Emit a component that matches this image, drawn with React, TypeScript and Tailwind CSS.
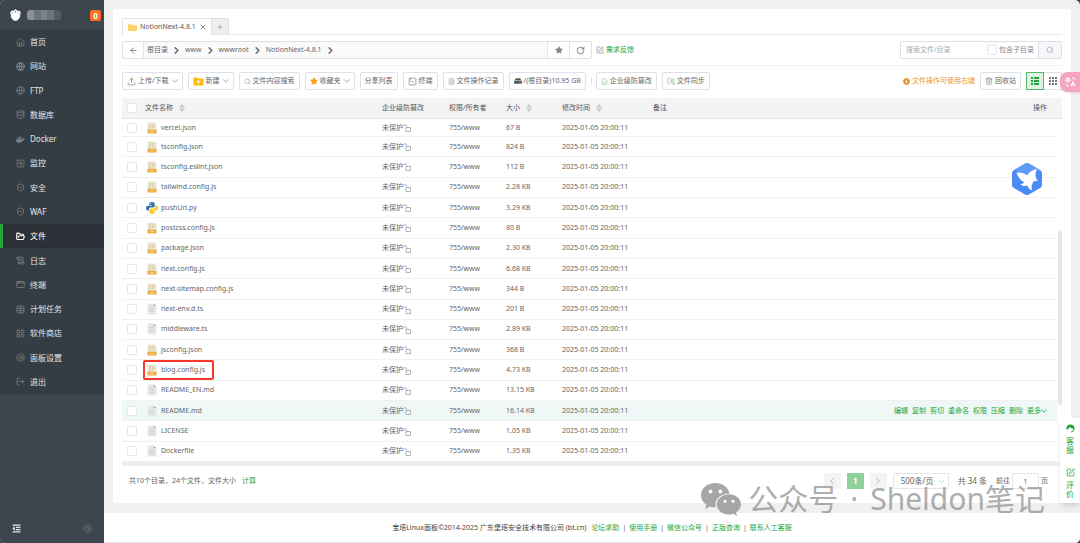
import type { ReactNode } from "react"
import {
  AppWindow, ArrowLeft, Bolt, ChevronDown, ChevronLeft, ChevronRight, Database, FilePenLine, FileText,
  FolderOpen, FolderSync, Globe, House, LayoutGrid, LogOut, Plus,
  RotateCw, ScrollText, Search, ShieldCheck, ShieldMinus, SquareActivity, SquarePen, SquareTerminal,
  Table, Trash2, Upload, X,
} from "lucide-react"
import { FaDocker, FaFolder, FaHdd, FaInfoCircle, FaOutdent, FaStar } from "react-icons/fa"

const menu = [
  { name: "首页", icon: <House size={9} /> },
  { name: "网站", icon: <Globe size={9} strokeWidth={3} /> },
  { name: "FTP", icon: <Globe size={9} /> },
  { name: "数据库", icon: <Database size={9} /> },
  { name: "Docker", icon: <FaDocker size={9} /> },
  { name: "监控", icon: <SquareActivity size={9} /> },
  { name: "安全", icon: <ShieldCheck size={9} /> },
  { name: "WAF", icon: <ShieldMinus size={9} /> },
  { name: "文件", icon: <FolderOpen size={9} strokeWidth={3} />, active: true },
  { name: "日志", icon: <ScrollText size={9} /> },
  { name: "终端", icon: <AppWindow size={9} /> },
  { name: "计划任务", icon: <Table size={9} /> },
  { name: "软件商店", icon: <LayoutGrid size={9} /> },
  { name: "面板设置", icon: <Bolt size={9} /> },
  { name: "退出", icon: <LogOut size={9} /> },
]

const files = [
  { name: "vercel.json", size: "67 B", type: "js" },
  { name: "tsconfig.json", size: "824 B", type: "js" },
  { name: "tsconfig.eslint.json", size: "112 B", type: "js" },
  { name: "tailwind.config.js", size: "2.28 KB", type: "js" },
  { name: "pushUrl.py", size: "3.29 KB", type: "py" },
  { name: "postcss.config.js", size: "80 B", type: "js" },
  { name: "package.json", size: "2.30 KB", type: "js" },
  { name: "next.config.js", size: "6.68 KB", type: "js" },
  { name: "next-sitemap.config.js", size: "344 B", type: "js" },
  { name: "next-env.d.ts", size: "201 B", type: "txt" },
  { name: "middleware.ts", size: "2.89 KB", type: "txt" },
  { name: "jsconfig.json", size: "368 B", type: "js" },
  { name: "blog.config.js", size: "4.73 KB", type: "js", marked: true },
  { name: "README_EN.md", size: "13.15 KB", type: "txt" },
  { name: "README.md", size: "16.14 KB", type: "txt", hover: true },
  { name: "LICENSE", size: "1.05 KB", type: "txt" },
  { name: "Dockerfile", size: "1.35 KB", type: "txt" },
]

const actions = ["编辑", "复制", "剪切", "重命名", "权限", "压缩", "删除"]
const links = ["论坛求助", "使用手册", "微信公众号", "正版查询", "联系人工客服"]

function FileIcon({ type }: { type: string }) {
  if (type === "py") {
    return (
      <svg width="12" height="12" viewBox="0 0 24 24" className="-ml-px">
        <path fill="#2f73a8" d="M11.9 0C7 0 6.500 2 6.500 4v2.500h5.800v1H4C1.500 7.500 0 9.500 0 12.200c0 2.800 1.400 5 3.500 5H5.800v-3c0-1.900 1.500-3.300 3.200-3.300h5.500c1.700 0 2.900-1.300 2.900-2.900V4C17.400 1.500 15.300 0 11.900 0zM9.300 2.200a1.100 1.100 0 1 1 0 2.200 1.100 1.100 0 0 1 0-2.200z" />
        <path fill="#fbca1d" d="M12.200 24c4.900 0 5.400-2 5.400-4v-2.500h-5.800v-1h8.300c2.500 0 3.900-2 3.900-4.700 0-2.800-1.400-5-3.500-5h-1.900v3c0 1.900-1.500 3.300-3.200 3.300H9.900c-1.700 0-2.900 1.300-2.900 2.900v4C7 22.500 8.800 24 12.200 24zm2.600-2.200a1.100 1.100 0 1 1 0-2.200 1.100 1.100 0 0 1 0 2.200z" />
      </svg>
    )
  }
  if (type === "js") {
    return (
      <svg width="10" height="12" viewBox="0 0 10 12">
        <path fill="#e9e5d6" d="M.5.500h7L9.500 2.500v6h-9z" />
        <path fill="none" stroke="#e3c37c" strokeWidth=".8" d="M3.800 2.300H3v4.400h-.8M6 2.300h1.200M6 4.500h1.200M6 2.300v4.400" />
        <path fill="#f0aa3c" d="M.5 7.800h9v3.700h-9z" />
        <path stroke="#fbe3b8" strokeWidth=".8" d="M3 9.700h4" />
      </svg>
    )
  }
  return (
    <svg width="10" height="12" viewBox="0 0 10 12">
      <path fill="#e7e7e7" d="M.5.500h6L9.500 3v8.500h-9z" />
      <path fill="#b5b5b5" d="M6.500.500L9.500 3h-3z" />
      <path stroke="#c6c6c6" strokeWidth=".7" d="M2.300 4.500h5M2.300 6.500h5M2.300 8.500h5" />
    </svg>
  )
}

function Sort() {
  return (
    <svg width="6" height="8" viewBox="0 0 6 8" className="inline-block ml-[6px]" fill="#c3c6cc">
      <path d="M3 0l3 3.500H0zM3 8L0 4.500h6z" />
    </svg>
  )
}

function Unlock() {
  return (
    <svg width="8" height="8" viewBox="0 0 8 8" fill="none" stroke="#aaa" strokeWidth=".9" className="mt-px">
      <path d="M3 3.500h4.500v4H3zM.5 2.500V1.800Q.8.600 2 .600T3.500 1.800v1.700" />
    </svg>
  )
}

function Down() {
  return <ChevronDown size={10} className="-ml-px -mr-[2px] text-[#999]" />
}

function Check({ label }: { label: string }) {
  return <input type="checkbox" aria-label={label} className="block appearance-none size-[10px] shrink-0 bg-white border border-[#e4e7ed] rounded-[2px]" />
}

function Btn({ children }: { children: ReactNode }) {
  return (
    <button className="h-[18px] px-[4px] flex items-center gap-[2px] bg-white border border-[#dfe1e6] rounded-[2px] whitespace-nowrap">{children}</button>
  )
}

function Sidebar() {
  return (
    <aside className="w-[104px] shrink-0 flex flex-col bg-[#3d454e] text-[#e3e5e7]">
      <div className="h-[30px] pl-[10px] pr-[3px] flex items-center">
        <svg width="11" height="12" viewBox="0 0 22 24" fill="#fff">
          <path d="M11 0l3 3 6 1 2 5-2 2 .3 5L16 22l-5 2-5-2-4.300-6L2 11 0 9l2-5 6-1z" />
          <path d="M3 9l4-3M19 9l-4-3M11 3v5" stroke="#7a828a" strokeWidth="1.500" />
        </svg>
        <div className="ml-[6px] w-[34px] h-[10px] rounded-[3px] overflow-hidden flex">
          <span className="flex-1 bg-[#8b9096]"></span>
          <span className="flex-1 bg-[#6c737a]"></span>
          <span className="flex-1 bg-[#7c8289]"></span>
          <span className="flex-1 bg-[#6c737a]"></span>
          <span className="flex-1 bg-[#535b63]"></span>
        </div>
        <span className="ml-auto size-[11px] rounded-[2px] bg-[#fc6d26] text-white font-bold text-[8px] leading-[11px] text-center">0</span>
      </div>

      <nav className="h-[364px] flex flex-col bg-[#353d44] text-[8px]">
        {menu.map((m) => (
          <a key={m.name} href="#" className={m.active
            ? "flex-1 flex items-center gap-[5px] pl-[13px] border-l-[3px] border-[#20a53a] bg-[#2c3138] text-white"
            : "flex-1 flex items-center gap-[5px] pl-[16px]"}>
            <span className={m.active ? "text-white" : "text-[#7d848a]"}>{m.icon}</span>
            {m.name}
          </a>
        ))}
      </nav>

      <div className="mt-auto h-[30px] px-[12px] flex items-center justify-between">
        <FaOutdent size={9} />
        <Bolt size={9} className="text-[#727980]" />
      </div>
    </aside>
  )
}

function FileTable() {
  return (
    <div className="relative mt-[8px] border-b-[4px] border-[#efefef]">
      <table className="table-fixed w-full h-[364px] border-separate border-spacing-0 text-left whitespace-nowrap">
        <thead>
          <tr className="h-[21px] bg-[#f4f4f4] text-[#555] [&>th]:font-normal [&>th]:p-0 [&>th]:border-b [&>th]:border-[#e6e6e6]">
            <th className="w-[23px]"><div className="pl-[5px]"><Check label="全选" /></div></th>
            <th className="w-[237px]">文件名称<Sort /></th>
            <th className="w-[67px]">企业级防篡改</th>
            <th className="w-[57px]">权限/所有者</th>
            <th className="w-[56px]">大小<Sort /></th>
            <th className="w-[91px]">修改时间<Sort /></th>
            <th>备注</th>
            <th className="w-[180px] text-right"><div className="pr-[10px]">操作</div></th>
            <th className="w-[5px]"></th>
          </tr>
        </thead>
        <tbody>
          {files.map((f, i) => (
            <tr key={f.name} className={(i === 0 ? "h-[18px] " : "") + "[&>td]:p-0 [&>td:not(:last-child)]:border-b [&>td]:border-[#f0f0f0] " + (f.hover ? "[&>td:not(:last-child)]:bg-[#eff8f6]" : "")}>
              <td><div className="pl-[5px]"><Check label={f.name} /></div></td>
              <td className="relative">
                <div className="flex items-center pl-[2px]">
                  <span className="w-[14px]"><FileIcon type={f.type} /></span>
                  {f.name}
                </div>
                {f.marked && <div className="absolute inset-y-0 -left-[2px] w-[71px] border-2 border-[#f5372c] rounded-[2px]"></div>}
              </td>
              <td>
                <div className="flex items-center">未保护<Unlock /></div>
              </td>
              <td>755/www</td>
              <td>{f.size}</td>
              <td>2025-01-05 20:00:11</td>
              <td></td>
              <td>
                {f.hover && (
                  <div className="flex justify-end gap-[4px] pr-[10px] text-[#20a53a]">
                    {actions.map((a) => <a key={a} href="#">{a}</a>)}
                    <a href="#" className="flex items-center">更多<ChevronDown size={10} className="-mx-[2px]" /></a>
                  </div>
                )}
              </td>
              <td></td>
            </tr>
          ))}
        </tbody>
      </table>
      {/* scroll thumb */}
      <div className="absolute right-0 bottom-[57px] w-[4px] h-[174px] rounded-full bg-[#e6e6e6]"></div>
      <svg className="absolute right-[20px] top-[65px]" width="30" height="32" viewBox="0 0 30 32">
        <path fill="#4a8bf5" d="M13 .6q2-1.100 4 0l11 6.300q2 1.100 2 3.400v11.400q0 2.300-2 3.400l-11 6.300q-2 1.100-4 0l-11-6.300q-2-1.100-2-3.400V10.300Q0 8 2 6.900z" />
        <path fill="#7aacfb" d="M13 .6q2-1.100 4 0l11 6.300L15 14 2 6.900z" opacity=".45" />
        <path fill="#fff" d="M4.500 9.500c4.500-.5 8 .5 10.500 3C17 9 20 7 25 6c-1.500 3-2 5.500-1.200 8 .3 1.300 1 2.700 2.400 3.700-2 0-3.700.3-5 1-1.300 2.800-2 5.500-1.200 8.800-2.500-1-4-2.700-4.800-4.900-2.700.9-5.200.3-7-1.600 2 .1 3.200-.5 4-1.700C8.700 17.500 6 14.500 4.500 9.500z" />
      </svg>
    </div>
  )
}

export default function App() {
  return (
    <div className="bg-[#3a3a3a] min-h-screen flex font-['Noto_Sans','Noto_Sans_CJK_SC',sans-serif] text-[7px] leading-[10px] text-[#666]">
      <div className="relative flex-1 flex rounded-[5px] overflow-hidden bg-[#f0f0f0]">
        <Sidebar />

        <main className="flex-1 min-w-0 flex flex-col">
          <section className="m-[9px] mb-[10px] p-[9px] pb-[14px] bg-white rounded-[2px]">
            {/* tabs */}
            <div className="flex h-[17px] border-b border-[#e8e8e8]">
              <div className="w-[90px] h-[17px] pl-[5px] pr-[4px] flex items-center bg-white border border-b-0 border-[#e3e3e3] text-[#555]">
                <FaFolder size={9} className="text-[#ffd368]" />
                <span className="ml-[3px]">NotionNext-4.8.1</span>
                <button aria-label="关闭" className="ml-auto"><X size={8} /></button>
              </div>
              <button aria-label="新标签" className="w-[17px] grid place-items-center bg-[#efefef] border border-l-0 border-b-0 border-[#dedede] text-[#999]"><Plus size={8} /></button>
            </div>

            {/* path */}
            <div className="mt-[6px] flex items-center">
              <div className="w-[470px] h-[18px] flex border border-[#dcdfe3] rounded-[2px]">
                <button aria-label="返回" className="w-[21px] grid place-items-center border-r border-[#e3e5e8]"><ArrowLeft size={9} /></button>
                <div className="flex-1 pl-[3px] flex items-center gap-[3px] bg-[#fafafa]">
                  {["根目录", "www", "wwwroot", "NotionNext-4.8.1"].map((p) => (
                    <a key={p} href="#" className="flex items-center gap-[3px]">{p}<ChevronRight size={11} strokeWidth={3} /></a>
                  ))}
                </div>
                <button aria-label="收藏" className="w-[22px] grid place-items-center border-l border-[#e3e5e8] text-[#888]"><FaStar size={8} /></button>
                <button aria-label="刷新" className="w-[22px] grid place-items-center border-l border-[#e3e5e8]"><RotateCw size={9} /></button>
              </div>
              <a href="#" className="ml-[4px] flex items-center gap-[2px] text-[#20a53a]"><SquarePen size={8} className="text-[#888]" />需求反馈</a>
              <div className="ml-auto w-[162px] h-[18px] flex items-center border border-[#dcdfe6] rounded-[2px]">
                <input aria-label="搜索" placeholder="搜索文件/目录" className="flex-1 min-w-0 pl-[5px] outline-none placeholder:text-[#aaa]" />
                <label className="flex items-center gap-[2px] pr-[4px] text-[#888]"><Check label="包含子目录" />包含子目录</label>
                <button aria-label="搜索文件" className="w-[23px] h-full grid place-items-center bg-[#f5f7fa] border-l border-[#dcdfe6] text-[#999]"><Search size={8} /></button>
              </div>
            </div>

            {/* toolbar */}
            <div className="mt-[6px] pt-[6px] border-t border-[#f0f0f0] flex items-center gap-[5px]">
              <Btn><Upload size={9} className="text-[#888]" />上传/下载<Down /></Btn>
              <Btn>
                <svg width="11" height="9" viewBox="0 0 11 9"><path fill="#fbbd08" d="M.5.500h3.500L5 1.500h5.500v7H.5z" /><path stroke="#fff" d="M5.500 3v3.600M3.700 4.800h3.600" /></svg>
                新建<Down />
              </Btn>
              <Btn><Search size={7} className="text-[#999]" />文件内容搜索</Btn>
              <Btn><FaStar size={8} className="text-[#f9a11b]" />收藏夹<Down /></Btn>
              <Btn>分享列表</Btn>
              <Btn><SquareTerminal size={9} className="text-[#888]" />终端</Btn>
              <Btn><FileText size={7} className="text-[#999]" />文件操作记录</Btn>
              <Btn><FaHdd size={8} className="text-[#555]" />/(根目录)10.95 GB</Btn>
              <span className="w-px h-[6px] -mr-px bg-[#ddd]"></span>
              <Btn><FilePenLine size={7} className="text-[#7fc48c]" />企业级防篡改</Btn>
              <Btn><FolderSync size={8} className="text-[#7fc48c]" />文件同步</Btn>
              <span className="ml-auto flex items-center gap-[2px] text-[#f0932b]"><FaInfoCircle size={7} />文件操作可使用右键</span>
              <Btn><Trash2 size={8} className="text-[#888]" />回收站</Btn>
              <div className="flex h-[18px]">
                <button aria-label="列表" className="w-[18px] grid place-items-center bg-[#dff3e3] border border-[#52b966]">
                  <svg width="8" height="8" viewBox="0 0 8 8" stroke="#20a53a" strokeWidth="2"><path d="M0 1h2M3 1h5M0 4h2M3 4h5M0 7h2M3 7h5" /></svg>
                </button>
                <button aria-label="图标" className="w-[18px] grid place-items-center border border-l-0 border-[#dfe1e6]">
                  <svg width="8" height="8" viewBox="0 0 8 8" stroke="#777" strokeWidth="2"><path d="M0 1h2M3 1h2M6 1h2M0 4h2M3 4h2M6 4h2M0 7h2M3 7h2M6 7h2" /></svg>
                </button>
              </div>
            </div>

            <FileTable />

            {/* pagination */}
            <div className="mt-[7px] pl-[7px] pr-[14px] h-[16px] flex items-center">
              <span>共10个目录，24个文件，文件大小</span>
              <a href="#" className="ml-[6px] text-[#20a53a]">计算</a>
              <div className="ml-auto flex items-center gap-[6px]">
                <button aria-label="上一页" className="w-[17px] h-[16px] grid place-items-center bg-[#f4f4f5] text-[#aaa]"><ChevronLeft size={10} /></button>
                <button className="w-[17px] h-[16px] bg-[#8fd19c] text-white font-bold text-[8px]">1</button>
                <button aria-label="下一页" className="w-[17px] h-[16px] grid place-items-center bg-[#f4f4f5] text-[#aaa]"><ChevronRight size={10} /></button>
                <div className="relative">
                  <select aria-label="每页条数" className="block appearance-none w-[56px] h-[16px] pl-[7px] border border-[#e3e5ea] rounded-[2px] text-[8px]">
                    <option>500条/页</option>
                  </select>
                  <ChevronDown size={9} className="absolute right-[3px] top-[4px] text-[#bbb]" />
                </div>
              </div>
              <span className="ml-[9px] text-[8px]">共 34 条</span>
              <label className="ml-[9px] flex items-center gap-[2px]">
                前往
                <input defaultValue="1" className="w-[27px] h-[16px] border border-[#e3e5ea] rounded-[2px] text-center" />
                页
              </label>
            </div>
          </section>

          <footer className="flex-1 flex items-center justify-center gap-[3px] bg-white border-b border-[#e5e5e5]">
            <span className="mr-[2px] text-[#444]">宝塔Linux面板©2014-2025 广东堡塔安全技术有限公司 (bt.cn)</span>
            {links.map((l, i) => (
              <span key={l} className="flex gap-[3px]">
                {i > 0 && <span>|</span>}
                <a href="#" className="text-[#20a53a]">{l}</a>
              </span>
            ))}
          </footer>
        </main>

        {/* translate badge */}
        <button aria-label="翻译" className="absolute right-0 top-[72px] w-[20px] h-[20px] rounded-l-[8px] bg-[#f6a3c4] grid place-items-center shadow-sm">
          <svg width="11" height="10" viewBox="0 0 22 20" fill="none" stroke="#fff" strokeWidth="2">
            <path d="M2 3h8v5H2zM6 0v11M14 2h3q2 0 2 3v1M8 18H5q-2 0-2-3v-1M12 19l4-10 4 10M13.500 16h5" />
          </svg>
        </button>

        {/* service panel */}
        <div className="absolute right-0 top-[418px] w-[20px] h-[85px] flex flex-col items-center justify-between pt-[6px] pb-[5px] bg-white rounded-l-[2px] shadow-md text-[8px] leading-[9px] text-[#20a53a]">
          <a href="#" className="flex flex-col items-center gap-[3px]">
            <svg width="9" height="9" viewBox="0 0 18 18" fill="#20a53a">
              <path d="M9 1c4.500 0 8 3 8 7v3h-3.500V8.500C11 8.500 9 7.500 8 6 7 7.500 6 8.500 4.500 8.700V11H1V8c0-4 3.500-7 8-7z" />
              <path d="M15 11q0 5-5 5" fill="none" stroke="#20a53a" strokeWidth="2" />
            </svg>
            <span className="w-[8px]">客服</span>
          </a>
          <a href="#" className="flex flex-col items-center gap-[3px]">
            <SquarePen size={9} />
            <span className="w-[8px]">评价</span>
          </a>
        </div>

        {/* watermark */}
        <div className="absolute right-[35px] top-[479px] flex items-center gap-[7px] text-[30px] leading-[40px] text-[#8a8a8a]/70 whitespace-nowrap pointer-events-none">
          <svg width="40" height="33" viewBox="0 0 40 33">
            <path fill="#a6a6a6" d="M14.500 0C6.500 0 0 5.400 0 12.300c0 3.900 2 7.200 5.300 9.500L4 26l5-2.600c2 .7 3.700.8 5.700.8C13 16 20 10.500 28.600 10.500 27.300 4.300 21.500 0 14.500 0z" />
            <path fill="#a6a6a6" d="M40 21.300c0-5.700-5.500-10-12-10s-12.200 4.400-12.200 10 5.400 10.200 12.200 10.200c1.500 0 2.900-.3 4.200-.7L36 33l-1-3.500c3-2 5-5 5-8.200z" />
            <g fill="#fff"><circle cx="9.500" cy="8.500" r="1.900" /><circle cx="19.300" cy="8.500" r="1.900" /><circle cx="24" cy="18.300" r="1.500" /><circle cx="32" cy="18.300" r="1.500" /></g>
          </svg>
          <div className="flex gap-[12px]">
            <span>公众号</span>
            <span>·</span>
            <span>Sheldon笔记</span>
          </div>
        </div>
      </div>
    </div>
  )
}
